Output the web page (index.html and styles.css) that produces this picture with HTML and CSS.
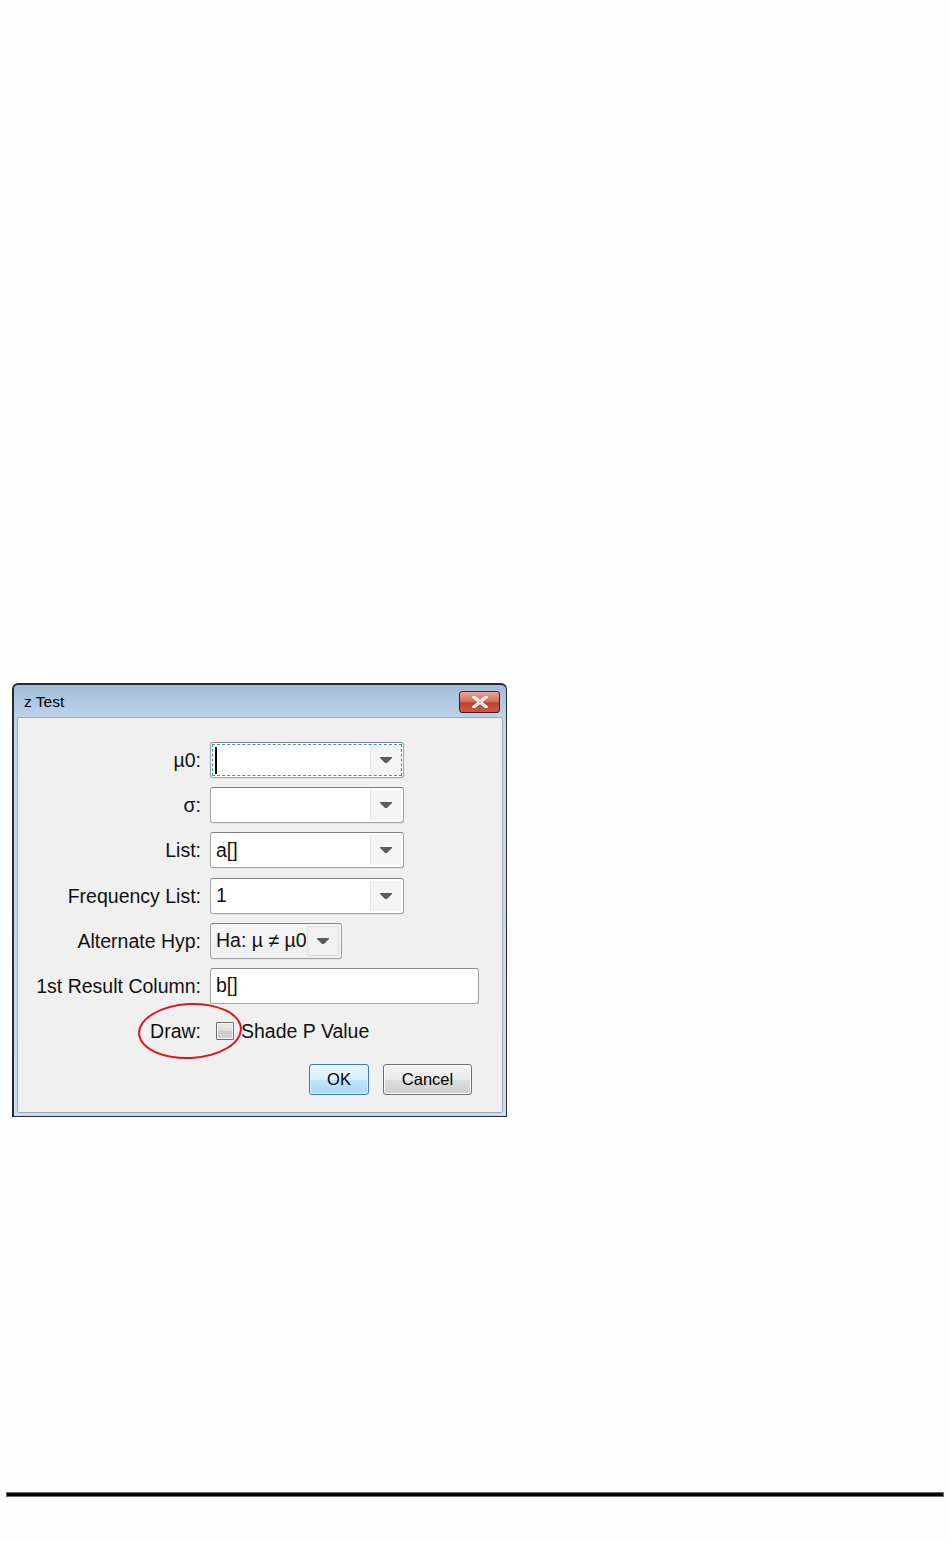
FILE: index.html
```html
<!DOCTYPE html>
<html lang="en">

<head>
    <meta charset="UTF-8">
    <title>z Test</title>
    <link rel="stylesheet" href="styles.css">
</head>

<body>
    <div class="page">
        <div class="dialog">
            <div class="title-bar">
                <span class="title">z Test</span>
                <div class="close-btn">
                    <svg width="18" height="12" viewBox="0 0 18 12">
                        <path d="M3 1 L15 11 M15 1 L3 11" stroke="#fff" stroke-width="3.2" stroke-linecap="square"/>
                        <path d="M3 1 L15 11 M15 1 L3 11" stroke="#7a2a22" stroke-width="0.6" fill="none" opacity="0.5"/>
                    </svg>
                </div>
            </div>
            <div class="panel">
                <div class="form">
                    <label class="label">µ0:</label>
                    <div class="combo focused">
                        <div class="combo-text"><span class="caret"></span></div>
                        <div class="drop-btn"><svg width="12" height="6" viewBox="0 0 12 6"><path d="M0 0 H12 V1 L7 6 H5 L0 1 Z" fill="#5c5c5c"/></svg></div>
                    </div>

                    <label class="label">σ:</label>
                    <div class="combo">
                        <div class="combo-text"></div>
                        <div class="drop-btn"><svg width="12" height="6" viewBox="0 0 12 6"><path d="M0 0 H12 V1 L7 6 H5 L0 1 Z" fill="#5c5c5c"/></svg></div>
                    </div>

                    <label class="label">List:</label>
                    <div class="combo">
                        <div class="combo-text">a[]</div>
                        <div class="drop-btn"><svg width="12" height="6" viewBox="0 0 12 6"><path d="M0 0 H12 V1 L7 6 H5 L0 1 Z" fill="#5c5c5c"/></svg></div>
                    </div>

                    <label class="label">Frequency List:</label>
                    <div class="combo">
                        <div class="combo-text">1</div>
                        <div class="drop-btn"><svg width="12" height="6" viewBox="0 0 12 6"><path d="M0 0 H12 V1 L7 6 H5 L0 1 Z" fill="#5c5c5c"/></svg></div>
                    </div>

                    <label class="label">Alternate Hyp:</label>
                    <div class="combo select">
                        <div class="combo-text">Ha: µ ≠ µ0</div>
                        <div class="drop-btn"><svg width="12" height="6" viewBox="0 0 12 6"><path d="M0 0 H12 V1 L7 6 H5 L0 1 Z" fill="#5c5c5c"/></svg></div>
                    </div>

                    <label class="label">1st Result Column:</label>
                    <div class="text-field">b[]</div>

                    <label class="label draw-label">Draw:<span class="mark"></span></label>
                    <div class="check-row">
                        <span class="checkbox"></span>
                        <span class="check-text">Shade P Value</span>
                    </div>
                </div>
                <div class="buttons">
                    <div class="btn ok">OK</div>
                    <div class="btn cancel">Cancel</div>
                </div>
            </div>
        </div>
        <div class="rule"></div>
    </div>
</body>
</html>
```

FILE: styles.css
```css
body {
    margin: 0;
    background: #fefefe;
    font-family: "Liberation Sans", Arial, sans-serif;
    color: #111;
}

.page {
    padding-top: 683px;
    height: 1542px;
    box-sizing: border-box;
}

.dialog {
    margin-left: 12px;
    width: 495px;
    box-sizing: border-box;
    border: 1px solid #2a2a2a;
    border-top-width: 2px;
    border-left-width: 2px;
    border-radius: 6px 6px 0 0;
    background: linear-gradient(#a2bcd9, #c3d8ec 40px, #c9def0);
    padding: 0 3px 3px 3px;
}

.title-bar {
    height: 32px;
    display: flex;
    align-items: center;
    justify-content: space-between;
    padding-left: 7px;
    padding-right: 3px;
}

.title {
    font-size: 15.5px;
    color: #000;
    margin-top: 2px;
}

.close-btn {
    width: 41px;
    height: 22px;
    box-sizing: border-box;
    border: 1px solid #4a1a18;
    border-radius: 3px;
    background: linear-gradient(#e9a797, #d4735f 45%, #bf4330 55%, #c95a44);
    display: flex;
    align-items: center;
    justify-content: center;
    margin-top: 2px;
}

.panel {
    border: 1px solid #9da8b4;
    border-radius: 2px;
    background: #f0f0f0;
    padding: 24px 0 17px 0;
}

.form {
    display: grid;
    grid-template-columns: 183px auto;
    column-gap: 9px;
    row-gap: 9.2px;
    justify-items: start;
}

.label {
    justify-self: end;
    align-self: center;
    font-size: 19.5px;
    line-height: 22px;
}

.combo {
    width: 194px;
    height: 36px;
    box-sizing: border-box;
    border: 1px solid #a3a3a3;
    border-top-color: #7f7f7f;
    border-radius: 3px;
    background: #fff;
    display: flex;
    padding: 2px;
    box-shadow: 0 1px 0 #e4e4e4;
}

.combo.focused {
    outline: 1px dashed #2b97c9;
    outline-offset: -3px;
}

.combo.select {
    width: 132px;
    background: linear-gradient(#f6f6f6, #efefef);
}

.combo-text {
    flex: 1;
    display: flex;
    align-items: center;
    padding-left: 3px;
    font-size: 19.5px;
    white-space: nowrap;
    overflow: hidden;
}

.caret {
    width: 2px;
    height: 27px;
    background: #000;
    margin-left: -1px;
}

.drop-btn {
    width: 30px;
    background: #f4f4f4;
    border-left: 1px solid #e3e3e3;
    display: flex;
    align-items: center;
    justify-content: center;
}

.select .drop-btn {
    background: #f1f1f1;
    border: 1px solid #dcdcdc;
    border-radius: 2px;
}

.text-field {
    width: 269px;
    height: 36px;
    box-sizing: border-box;
    border: 1px solid #a3a3a3;
    border-top-color: #8a8a8a;
    border-radius: 3px;
    background: #fff;
    display: flex;
    align-items: center;
    padding-left: 5px;
    font-size: 19.5px;
}

.draw-label {
    position: relative;
    height: 36px;
    line-height: 36px;
}

/* red ellipse drawn over the Draw: option */
.mark {
    position: absolute;
    left: -12px;
    top: -10px;
    width: 100px;
    height: 52px;
    border: 2.5px solid #e5121c;
    border-radius: 50%;
    transform: rotate(-3deg);
}

.check-row {
    height: 36px;
    display: flex;
    align-items: center;
    padding-left: 6px;
    gap: 7px;
}

.checkbox {
    width: 18px;
    height: 18px;
    box-sizing: border-box;
    border: 1px solid #6f6f6f;
    border-radius: 1px;
    background: linear-gradient(#eaeaea, #dcdcdc 50%, #c9cccf 50%, #d2d4d6);
    box-shadow: inset 0 0 0 1px #f6f6f6;
}

.check-text {
    font-size: 19.5px;
}

.buttons {
    display: flex;
    justify-content: flex-end;
    gap: 14px;
    padding-right: 30px;
    margin-top: 15px;
}

.btn {
    height: 31px;
    box-sizing: border-box;
    border-radius: 3px;
    display: flex;
    align-items: center;
    justify-content: center;
    font-size: 16.5px;
    color: #000;
}

.ok {
    width: 60px;
    border: 1px solid #3d7bad;
    background: linear-gradient(#eaf6fd, #d9f0fc 50%, #bee6fd 50%, #a7d9f5);
    box-shadow: inset 0 0 0 1px #dff2fc;
}

.cancel {
    width: 89px;
    border: 1px solid #707070;
    background: linear-gradient(#f2f2f2, #ebebeb 50%, #dddddd 50%, #cfcfcf);
    box-shadow: inset 0 0 0 1px #fbfbfb;
}

.rule {
    margin: 375px 6px 0 6px;
    height: 3px;
    background: #000;
    border: 1px solid #6a6a6a;
}
```
